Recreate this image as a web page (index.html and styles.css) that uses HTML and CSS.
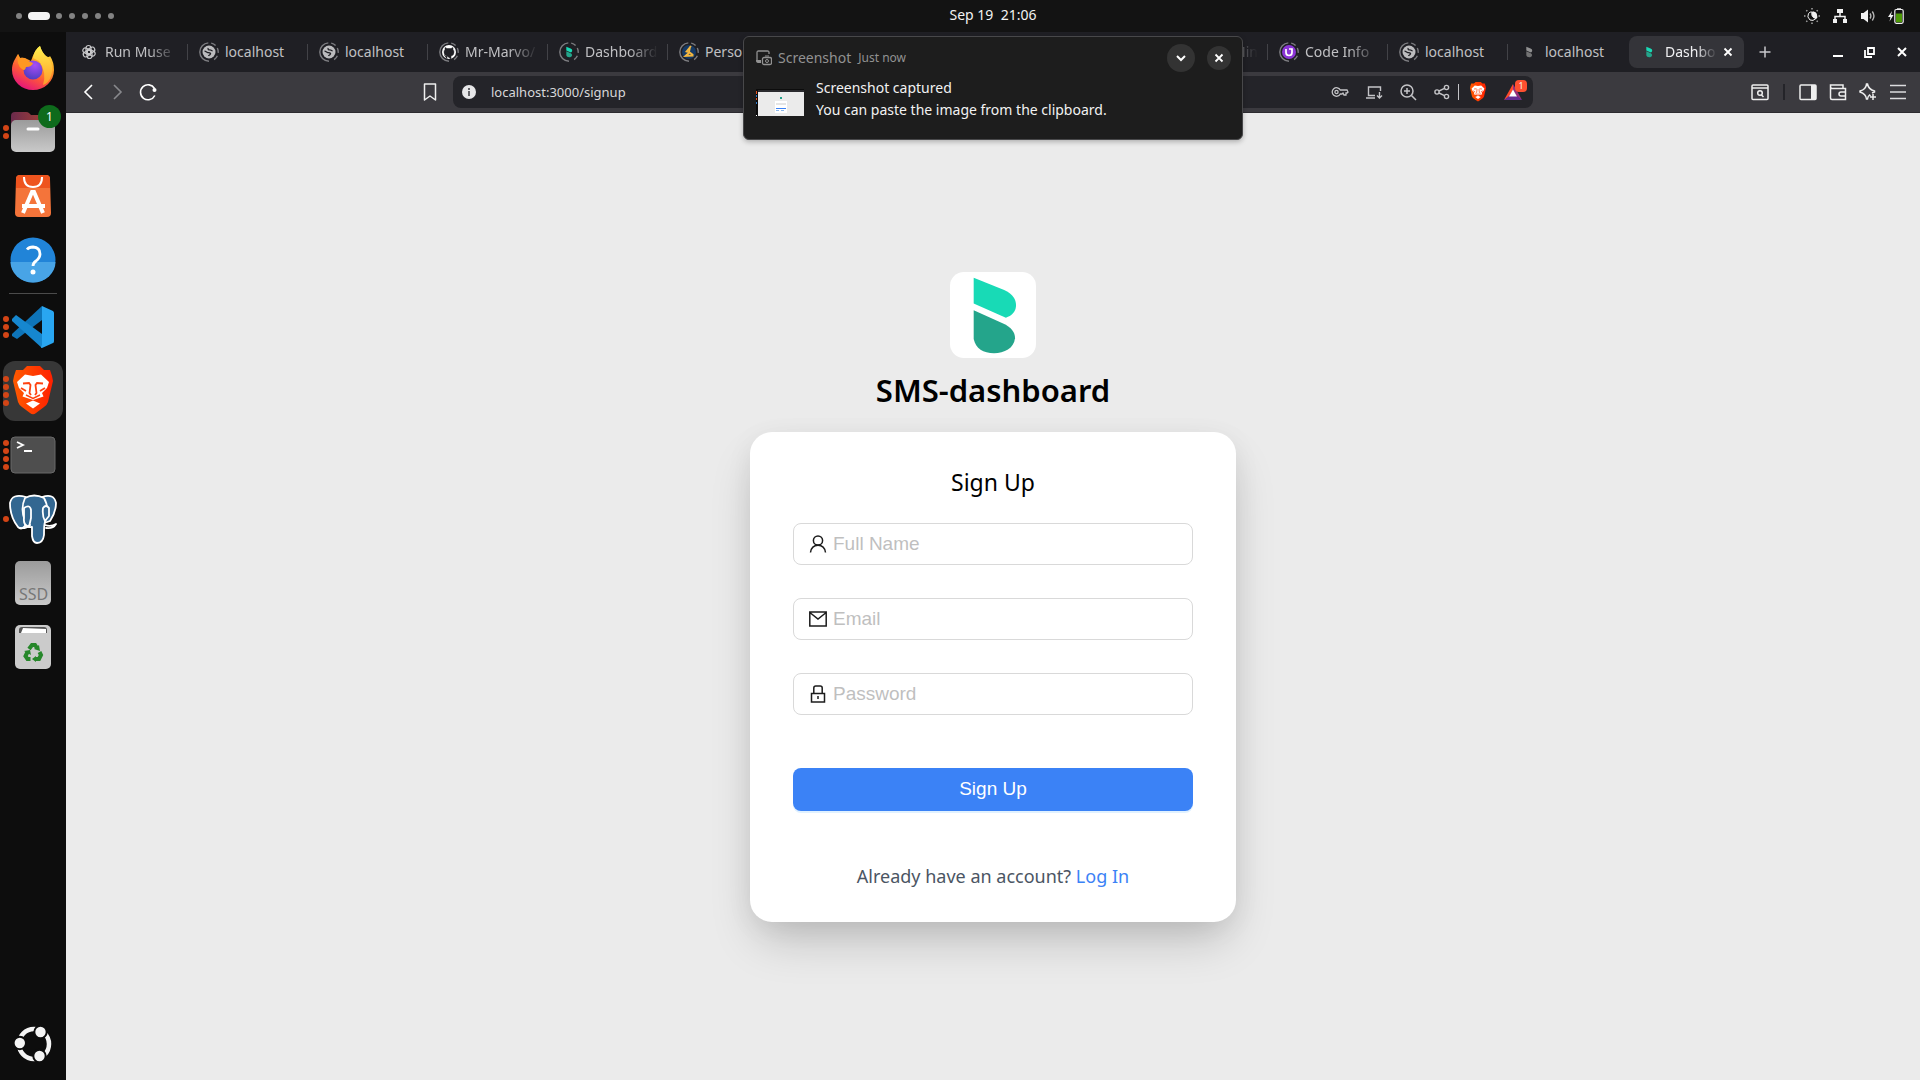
FILE: index.html
```html
<!DOCTYPE html>
<html lang="en">
<head>
<meta charset="utf-8">
<title>Dashboard</title>
<link rel="stylesheet" href="styles.css">
</head>
<body>
<svg class="defs" aria-hidden="true">
  <defs>
    <linearGradient id="g-fox" x1="0.8" y1="0" x2="0.3" y2="1"><stop offset="0" stop-color="#fff44f"/><stop offset=".35" stop-color="#ffa726"/><stop offset=".65" stop-color="#ff5a36"/><stop offset="1" stop-color="#e3127e"/></linearGradient>
    <radialGradient id="g-globe" cx=".6" cy=".25" r=".8"><stop offset="0" stop-color="#a84df5"/><stop offset="1" stop-color="#4a3cc0"/></radialGradient>
    <linearGradient id="g-tail" x1="0" y1="0" x2="0" y2="1"><stop offset="0" stop-color="#fff04d"/><stop offset="1" stop-color="#ff9a2a"/></linearGradient>
    <linearGradient id="g-grey" x1="0" y1="0" x2="0" y2="1"><stop offset="0" stop-color="#9b9b9b"/><stop offset="1" stop-color="#c9c9c9"/></linearGradient>
    <linearGradient id="g-folder" x1="0" y1="0" x2="1" y2="0"><stop offset="0" stop-color="#6b2a4c"/><stop offset="1" stop-color="#b5472f"/></linearGradient>
    <linearGradient id="g-brave" x1="0" y1="0" x2="1" y2="0"><stop offset="0" stop-color="#ff5a00"/><stop offset="1" stop-color="#ff2000"/></linearGradient>
  </defs>
  <symbol id="i-ring" viewBox="0 0 20 20">
    <circle cx="10" cy="10" r="9.200" fill="none" stroke="#7d7d81" stroke-width="1.400" stroke-dasharray="28 3 5 3 5 3 5 5.800" transform="rotate(90 10 10)"/>
  </symbol>
  <symbol id="i-globe" viewBox="0 0 20 20">
    <use href="#i-ring"/>
    <circle cx="10" cy="10" r="6.500" fill="#bcbcbe"/>
    <path d="M5.500 9.200c1.800 0 2.400 1.500 4.200 1.500 1.600 0 2.400.8 1.500 1.700-.8.600-1.300.8-1.700 1.700M9.200 6c-.6 1.400.4 2 1.700 1.800 1-.1 1.300.9 2.700 1" fill="none" stroke="#202025" stroke-width="1.300"/>
  </symbol>
  <symbol id="i-b" viewBox="0 0 254 254">
    <path d="M70 17 160 53C190 67 195 84 195 100C194 118 182 130 165 135L70 93Z" class="b-top"/>
    <path d="M70 113 165 156C186 169 192 182 192 196C189 226 160 240 130 240C98 240 76 226 70 198Z" class="b-bottom"/>
  </symbol>
  <symbol id="i-brave" viewBox="0 0 44 50">
    <path d="M12 4 16 0H29L33 4 39 4 41 10 42 15 37 36Q36 39 33 41L25 47Q22 49.500 19 47L11 41Q8 39 7 36L2 15 3 10 5 4Z" fill="url(#g-brave)"/>
    <path d="M14 8.500 22 10 30 8.500 38 16 36 22 31 27 32.500 30.500 22 34 11.500 30.500 13 27 8 22 6 16Z" fill="#fff"/>
    <path d="M22 34.500 29 37.500 22 42.500 15 37.500Z" fill="#fff"/>
    <path d="M12 17.500 18 17 19.500 19 18.500 27 20 29M32 17.500 26 17 24.500 19 25.500 27 24 29M10 22 15 25M34 22 29 25" fill="none" stroke="#ff4210" stroke-width="1.800"/>
    <path d="M15 29 22 32.500 29 29" fill="none" stroke="#ff4210" stroke-width="1.500"/>
  </symbol>
</svg>

<div class="desktop">
  <header class="topbar">
    <div class="workspaces"><i></i><i class="current"></i><i></i><i></i><i></i><i></i><i></i></div>
    <time class="clock">Sep 19&nbsp; 21:06</time>
    <div class="tray">
      <svg width="16" height="16" viewBox="0 0 16 16"><path d="M8.500 3.200a5 5 0 0 1 4 7.300Q7 10.500 8.500 3.200Z" fill="#f2f2f2"/><path d="M8 4q-1.500 5 4 6.500Q9 13.500 6 12 2.500 9 4.500 5.500 6 3.500 8 4Z" fill="none" stroke="#f2f2f2"/><path d="M8.200 4Q12 3 13 7t-1 3.500Q7 9.500 8.200 4Z" fill="#f2f2f2"/><path d="M8 0v1.500M8 14.500V16M0 8h1.500M14.500 8H16M2.300 2.300l1 1M12.700 12.700l1 1M2.300 13.700l1-1M12.700 3.300l1-1" stroke="#a5a5a5" stroke-width="1.500"/></svg>
      <svg width="16" height="16" viewBox="0 0 16 16"><path d="M5 1h6v4H5zM1 11h4v4H1zM11 11h4v4h-4z" fill="#f2f2f2"/><path d="M8 4v4M3 12V8.500h10V12" fill="none" stroke="#f2f2f2" stroke-width="1.500"/></svg>
      <svg width="16" height="16" viewBox="0 0 16 16"><path d="M1 5h2.500L8 1.500v13L3.500 11H1Z" fill="#f2f2f2"/><path d="M10 5.500q1.700 2.500 0 5M12.300 3.500q3.300 4.500 0 9" fill="none" stroke="#b5b5b5" stroke-width="1.400"/></svg>
      <svg width="16" height="16" viewBox="0 0 16 16"><path d="M4 3 0 9h2.500L1.500 13.500 5.500 7H3Z" fill="#f2f2f2"/><rect x="6.800" y="1.500" width="8.400" height="13.800" rx="1.500" fill="none" stroke="#f2f2f2" stroke-width="1.200"/><path d="M9 .3h4v1.500H9z" fill="#f2f2f2"/><path d="M8 5.500h6v8.700H8z" fill="#4e9a06"/></svg>
    </div>
  </header>

  <div class="workarea">
    <nav class="dock">
      <a class="app" href="#" aria-label="Firefox">
        <svg width="44" height="46" viewBox="0 0 44 46"><path d="M1 25C1 18 4 14 7 9L9 13Q13 12 16 14L20 16Q24 4 29 1Q31 8 35 11Q38 13 39 11Q43 17 43 25A21 20 0 0 1 1 25Z" fill="url(#g-fox)"/><path d="M22 13Q23 5 29 1Q31 8 36 12Q44 20 40 31Q38 38 32 40Q36 27 28 16Z" fill="url(#g-tail)"/><circle cx="22" cy="25" r="9.500" fill="url(#g-globe)"/><path d="M7 9 9 13Q14 12 17 16L22 18Q21 22 15 22 14 27 11 24Q5 20 7 9Z" fill="#ff9722"/></svg>
      </a>
      <a class="app" href="#" aria-label="Files">
        <span class="dots"><i></i><i></i></span>
        <svg width="46" height="46" viewBox="0 0 46 46"><path d="M1 7q0-4 4-4h11q2 0 3 1l2 2h20q4 0 4 4v10H1Z" fill="url(#g-folder)"/><rect x="1" y="11" width="44" height="32" rx="5" fill="url(#g-grey)"/><path d="M18 20h10" stroke="#fff" stroke-width="3" stroke-linecap="round"/></svg>
        <span class="count">1</span>
      </a>
      <a class="app" href="#" aria-label="App Center">
        <svg width="44" height="44" viewBox="0 0 44 44"><path d="M9 1h26q4 0 4 4l1 34q0 4-4 4H8q-4 0-4-4L5 5q0-4 4-4Z" fill="#f4743a"/><path d="M9 1h26q4 0 4 4v9H5V5q0-4 4-4Z" fill="#ee541e"/><path d="M13 3q0 10 9 10t9-10" fill="none" stroke="#fff" stroke-width="2"/><path d="M12 39 21 18h2l9 21M11 32h23" fill="none" stroke="#fff" stroke-width="4"/></svg>
      </a>
      <a class="app" href="#" aria-label="Help">
        <svg width="46" height="46" viewBox="0 0 46 46"><circle cx="23" cy="23" r="22.500" fill="#2184d8"/><path d="M.5 25a22.500 20.500 0 0 0 45 0Z" fill="#48a4e6"/><path d="M17 12.500Q19 10 23 10q7 .5 7 7 0 4-4 7-3 2-3 5" fill="none" stroke="#fff" stroke-width="2.800"/><circle cx="23" cy="35" r="2.500" fill="#fff"/></svg>
      </a>
      <hr>
      <a class="app" href="#" aria-label="Visual Studio Code">
        <span class="dots"><i></i><i></i><i></i></span>
        <svg width="44" height="44" viewBox="0 0 44 44"><path d="M1 29 31 1V15L6 34 1 31Z" fill="#0e74b8"/><path d="M1 14 5 10 31 29V43L1 16Z" fill="#1687cf"/><path d="M31 1 42 6Q43 7 43 8V36Q43 38 42 38L31 43Q29 43 31 40Z" fill="#29a6f1"/></svg>
      </a>
      <a class="app focused" href="#" aria-label="Brave">
        <span class="dots"><i></i><i></i><i></i><i></i></span>
        <svg width="44" height="50"><use href="#i-brave"/></svg>
      </a>
      <a class="app" href="#" aria-label="Terminal">
        <span class="dots"><i></i><i></i><i></i><i></i></span>
        <svg width="46" height="38" viewBox="0 0 46 38"><rect x="1" y="1" width="44" height="36" rx="4" fill="#4e4e4e" stroke="#686868"/><path d="M7 6 13 9 7 12M14 15h8" fill="none" stroke="#fff" stroke-width="1.800"/></svg>
      </a>
      <a class="app" href="#" aria-label="PostgreSQL">
        <span class="dots"><i></i></span>
        <svg width="48" height="50" viewBox="0 0 48 50"><g fill="#336791" stroke="#fff" stroke-width="1.800" stroke-linejoin="round" stroke-linecap="round"><path d="M17 3Q3-1 1 9q0 14 8 24 3 3 6 0l4-4-2-20Z"/><path d="M33 3q12-4 14 6 0 9-6 18l-6 2Z"/><path d="M16 4q9-5 19 0 6 10 1 24-1 2-1 13-1 8-7 8-4 0-5-7V33q-8 1-7-6-5-12 0-23Z"/><path d="M15 14q6-4 7 2v8l-2 9q-6-2-5-9ZM34 14q3-4 6 0v8l-4 5q-3-5-2-13Z" fill="#336791"/><path d="M36 31q6 2 11-1-3 5-10 4M21 31q-4 4-10 3" fill="none"/></g></svg>
      </a>
      <a class="app" href="#" aria-label="SSD">
        <svg width="38" height="46" viewBox="0 0 38 46"><rect x="1" y="1" width="36" height="44" rx="5" fill="url(#g-grey)"/></svg>
        <span class="disk-label">SSD</span>
      </a>
      <a class="app" href="#" aria-label="Trash">
        <svg width="38" height="46" viewBox="0 0 38 46"><rect x="1" y="1" width="36" height="44" rx="5" fill="#cbcbcb"/><path d="M5 9V6q0-3 3-3h22q3 0 3 3v3Z" fill="#555"/><path d="m7 9 2-5 23 1v4Z" fill="#fff"/><g fill="none" stroke="#26872a" stroke-width="4"><path d="M15 25l3-4h3l2 3M25.500 28l1.500 3-2 4H21M16.500 35h-3l-2-3 2-4"/></g><path d="m25 21 1 6-6-2ZM22 32v6l-4-3ZM10 27l6-1 1 5Z" fill="#26872a"/></svg>
      </a>
      <a class="app launcher" href="#" aria-label="Show apps">
        <svg width="38" height="38" viewBox="0 0 38 38"><circle cx="20" cy="19" r="15" fill="none" stroke="#f4f4f4" stroke-width="4.500"/><g fill="#f4f4f4" stroke="#0d0d0d" stroke-width="2"><circle cx="26.500" cy="7" r="6.200"/><circle cx="5.800" cy="18" r="6.200"/><circle cx="25.500" cy="31" r="6.200"/></g></svg>
      </a>
    </nav>

    <div class="browser">
      <div class="tabstrip">
        <div class="tab"><svg width="20" height="20" viewBox="0 0 20 20"><g fill="none" stroke="#c9c9cb" stroke-width="1.200"><rect x="7" y="3.500" width="5" height="8.500" rx="2.500"/><rect x="7" y="3.500" width="5" height="8.500" rx="2.500" transform="rotate(60 10 10)"/><rect x="7" y="3.500" width="5" height="8.500" rx="2.500" transform="rotate(120 10 10)"/><rect x="7" y="3.500" width="5" height="8.500" rx="2.500" transform="rotate(180 10 10)"/><rect x="7" y="3.500" width="5" height="8.500" rx="2.500" transform="rotate(240 10 10)"/><rect x="7" y="3.500" width="5" height="8.500" rx="2.500" transform="rotate(300 10 10)"/></g></svg><span>Run Muse</span></div>
        <div class="tab plain"><svg width="20" height="20"><use href="#i-globe"/></svg><span>localhost</span></div>
        <div class="tab plain"><svg width="20" height="20"><use href="#i-globe"/></svg><span>localhost</span></div>
        <div class="tab"><svg width="20" height="20" viewBox="0 0 20 20"><use href="#i-ring"/><circle cx="10" cy="10" r="7" fill="#fff"/><path d="M8 17v-3q-2 .5-3-1M8 14q-3-.5-3-4 0-1.500 1-2.500V5.500l2 1h4l2-1V7.500q1 1 1 2.500 0 3.500-3 4v3Z" fill="#202025" stroke="#202025" stroke-width=".5"/></svg><span>Mr-Marvo/</span></div>
        <div class="tab"><svg width="20" height="20" viewBox="0 0 20 20"><use href="#i-ring"/><use href="#i-b" x="4" y="4" width="12" height="12"/></svg><span>Dashboard</span></div>
        <div class="tab plain"><svg width="20" height="20" viewBox="0 0 20 20"><use href="#i-ring"/><circle cx="10" cy="10" r="7" fill="#153a66"/><path d="M12 4 7.500 9.500l3 1-4 3.500 8-.5M11 5l-1 5 4 3" fill="none" stroke="#f3b63f" stroke-width="1.800"/></svg><span>Perso</span></div>
        <div class="tab"></div>
        <div class="tab"></div>
        <div class="tab"></div>
        <div class="tab tail"><span>Min</span></div>
        <div class="tab"><svg width="20" height="20" viewBox="0 0 20 20"><use href="#i-ring"/><circle cx="10" cy="10" r="7" fill="#8b35d6"/><path d="M7 7v3.500q0 3 3 3t3-3V7h-3" fill="none" stroke="#fff" stroke-width="1.700"/></svg><span>Code Info</span></div>
        <div class="tab plain"><svg width="20" height="20"><use href="#i-globe"/></svg><span>localhost</span></div>
        <div class="tab plain muted"><svg width="20" height="20" viewBox="0 0 20 20"><use href="#i-b" x="4" y="4" width="12" height="12"/></svg><span>localhost</span></div>
        <div class="tab active"><svg width="20" height="20" viewBox="0 0 20 20"><use href="#i-b" x="4" y="4" width="12" height="12"/></svg><span>Dashbo</span><button aria-label="Close tab"><svg width="10" height="10" viewBox="0 0 10 10"><path d="m1.500 1.500 7 7m0-7-7 7" stroke="#fff" stroke-width="1.800"/></svg></button></div>
        <button class="newtab" aria-label="New tab"><svg width="12" height="12" viewBox="0 0 12 12"><path d="M6 .5v11M.5 6h11" stroke="#c8c8cb" stroke-width="1.500"/></svg></button>
        <div class="winctl">
          <button aria-label="Minimize"><svg width="12" height="12" viewBox="0 0 12 12"><path d="M1 10h10" stroke="#fff" stroke-width="2"/></svg></button>
          <button aria-label="Restore"><svg width="12" height="12" viewBox="0 0 12 12"><path d="M4 2h6v6H4zM1 4v7h7" fill="none" stroke="#fff" stroke-width="1.800"/></svg></button>
          <button aria-label="Close"><svg width="12" height="12" viewBox="0 0 12 12"><path d="m2 2 8 8m0-8-8 8" stroke="#fff" stroke-width="2"/></svg></button>
        </div>
      </div>

      <div class="toolbar">
        <div class="navbtns">
          <button aria-label="Back"><svg width="20" height="20" viewBox="0 0 20 20"><path d="M14 3 7 10l7 7" fill="none" stroke="#fff" stroke-width="1.600"/></svg></button>
          <button aria-label="Forward"><svg width="20" height="20" viewBox="0 0 20 20"><path d="m6 3 7 7-7 7" fill="none" stroke="#89898d" stroke-width="1.600"/></svg></button>
          <button aria-label="Reload"><svg width="20" height="20" viewBox="0 0 20 20"><path d="M16.500 6.500a7.500 7.500 0 1 0 .3 7" fill="none" stroke="#fff" stroke-width="1.600"/><circle cx="16.500" cy="8" r="2" fill="#fff"/></svg></button>
        </div>
        <button class="bookmark" aria-label="Bookmark"><svg width="20" height="20" viewBox="0 0 20 20"><path d="M4.500 2h11v16L10 14l-5.500 4Z" fill="none" stroke="#eee" stroke-width="1.500" stroke-linejoin="round"/></svg></button>
        <div class="omnibox">
          <svg width="14" height="14" viewBox="0 0 14 14"><circle cx="7" cy="7" r="7" fill="#e6e6e8"/><path d="M7 3v2M7 6v5" stroke="#55555a" stroke-width="1.800"/></svg>
          <input aria-label="Address" value="localhost:3000/signup">
          <div class="boxicons">
            <svg width="18" height="18" viewBox="0 0 18 18"><g fill="none" stroke="#c4c4c7" stroke-width="1.300"><path d="M9.300 7A4.300 4.300 0 1 0 9.300 11L11 11l1-1 1 2h2v-2h1l1-1-1-2Z"/><circle cx="5.500" cy="9" r="1.600"/></g></svg>
            <svg width="18" height="18" viewBox="0 0 18 18"><path d="M10 12.500H3.500V4h12v4M1 15h9M14.500 9v6M12 12.500l2.500 2.500 2.500-2.500" fill="none" stroke="#c4c4c7" stroke-width="1.400"/></svg>
            <svg width="18" height="18" viewBox="0 0 18 18"><path d="M12.500 12.500 17 17M8 5v6M5 8h6" stroke="#c4c4c7" stroke-width="1.500"/><circle cx="8" cy="8" r="6" fill="none" stroke="#c4c4c7" stroke-width="1.500"/></svg>
            <svg width="18" height="18" viewBox="0 0 18 18"><g fill="none" stroke="#c4c4c7" stroke-width="1.400"><circle cx="4" cy="9" r="2.100"/><circle cx="13.500" cy="4.500" r="2.100"/><circle cx="13.500" cy="13.500" r="2.100"/><path d="m6 8 5.500-2.600M6 10l5.500 2.600"/></g></svg>
          </div>
          <i class="bar"></i>
          <svg class="shield" width="18" height="20"><use href="#i-brave"/></svg>
          <span class="rewards"><svg width="18" height="16" viewBox="0 0 18 16"><path d="M9 0v6l-4 7-5 3Z" fill="#ff4a2c"/><path d="M9 0v6l4 7 5 3Z" fill="#98307a"/><path d="m0 16 5-4h8l5 4Z" fill="#662d91"/><path d="m9 5.500 4 7H5Z" fill="#fff"/></svg><b>1</b></span>
        </div>
        <div class="actions">
          <button aria-label="Search tabs"><svg width="20" height="20" viewBox="0 0 20 20"><g fill="none" stroke="#eee" stroke-width="1.500"><rect x="2" y="3" width="16" height="14.500" rx="1"/><path d="M2 6h16M11.500 13l2 2"/><circle cx="10" cy="11" r="2.300"/></g></svg></button>
          <i class="bar dark"></i>
          <button aria-label="Sidebar"><svg width="20" height="20" viewBox="0 0 20 20"><rect x="2" y="3" width="16" height="14.500" rx="1" fill="none" stroke="#eee" stroke-width="1.500"/><path d="M13 3h5v14.500h-5z" fill="#eee"/></svg></button>
          <button aria-label="Wallet"><svg width="20" height="20" viewBox="0 0 20 20"><path d="M15 6V3H2.500v13q0 1.500 1.500 1.500h13.500V6.500H4Q2.500 6.500 2.500 4M17.500 10H13q-2 0-2 2t2 2h4.500" fill="none" stroke="#eee" stroke-width="1.500"/></svg></button>
          <button aria-label="Leo AI"><svg width="20" height="20" viewBox="0 0 20 20"><path d="M12.500 14 11.500 13Q10 14 9.500 17H8.500Q8 12 2 10V9Q8 7.500 8.500 2H9.500Q10.500 7.500 16.500 9V10L14 11M15 12v6M12 15h6" fill="none" stroke="#eee" stroke-width="1.500"/></svg></button>
          <button aria-label="Menu"><svg width="20" height="20" viewBox="0 0 20 20"><path d="M2 3.500h16M2 10h16M2 16.500h16" stroke="#dcdcde" stroke-width="1.600"/></svg></button>
        </div>
      </div>

      <main class="page">
        <div class="brand">
          <svg class="logo" width="86" height="86"><use href="#i-b"/></svg>
          <h1>SMS-dashboard</h1>
        </div>
        <form class="card">
          <h2>Sign Up</h2>
          <label class="field"><svg width="18" height="18" viewBox="0 0 18 18"><g fill="none" stroke="#1c1c1c" stroke-width="1.500"><circle cx="9" cy="5.500" r="4.600"/><path d="M1.500 17.500Q2.500 10.300 9 10.300t7.500 7.200"/></g></svg><input type="text" placeholder="Full Name" aria-label="Full Name"></label>
          <label class="field"><svg width="18" height="18" viewBox="0 0 18 18"><path d="M.8 2h16.400v14H.8ZM.8 2.500 9 9l8.200-6.500" fill="none" stroke="#1c1c1c" stroke-width="1.500"/></svg><input type="email" placeholder="Email" aria-label="Email"></label>
          <label class="field"><svg width="18" height="18" viewBox="0 0 18 18"><path d="M2.500 8.500h13v8.500h-13ZM4.800 8.500V3q0-2 2-2h4.400q2 0 2 2v5.500M9 11v3" fill="none" stroke="#1c1c1c" stroke-width="1.500"/></svg><input type="password" placeholder="Password" aria-label="Password"></label>
          <button type="submit" class="submit">Sign Up</button>
          <p>Already have an account? <a href="#">Log In</a></p>
        </form>
      </main>
    </div>
  </div>

  <aside class="notification">
    <div class="note-head">
      <svg width="16" height="16" viewBox="0 0 16 16"><path d="M13 4V2.500Q13 1 11.500 1h-9Q1 1 1 2.500V11h4" fill="none" stroke="#929292" stroke-width="1.300"/><path d="M0 10h5v3H2Q0 13 0 10Z" fill="#929292"/><rect x="6.500" y="7.500" width="9" height="7" rx="1.500" fill="none" stroke="#929292" stroke-width="1.300"/><circle cx="11" cy="11" r="1.500" fill="none" stroke="#929292"/><path d="M9 6h4" stroke="#929292"/></svg>
      <span>Screenshot</span><small>Just now</small>
      <button class="expand" aria-label="Expand"><svg width="12" height="12" viewBox="0 0 12 12"><path d="m2 4 4 4 4-4" fill="none" stroke="#fff" stroke-width="2"/></svg></button>
      <button class="dismiss" aria-label="Dismiss"><svg width="12" height="12" viewBox="0 0 12 12"><path d="m2.500 2.500 7 7m0-7-7 7" stroke="#fff" stroke-width="1.800"/></svg></button>
    </div>
    <div class="note-body">
      <svg width="48" height="27" viewBox="0 0 48 27"><path d="M0 0h48v27H0z" fill="#0c0c0c"/><path d="M2 1h46v2H2z" fill="#2b2b2f"/><path d="M2 3h46v24H2z" fill="#ebebeb"/><path d="M0 2h1v3H0zM0 9h1v2H0z" fill="#e95420"/><path d="M0 6h1v2H0zM0 13h1v2H0z" fill="#2f7fd0"/><path d="M0 26h1v1H0z" fill="#fff"/><path d="M24 8h2v2h-2z" fill="#22a08a"/><path d="M19 12h12v12H19z" fill="#fff"/><path d="M20 14h10v2H20z" fill="#e4e4e4"/><path d="M20 19h10v1H20z" fill="#3b82f6"/><path d="M20 21h3v1h-3zM25 21h3v1h-3z" fill="#8ab6ea"/></svg>
      <div><strong>Screenshot captured</strong><p>You can paste the image from the clipboard.</p></div>
    </div>
  </aside>
</div>
</body>
</html>
```
FILE: styles.css
```css
* { box-sizing: border-box; }
body {
  margin: 0;
  font: 14px/20px "Noto Sans", sans-serif;
  color: #f2f2f2;
  background: #131313;
}
h1, h2, p { margin: 0; }
button { border: 0; padding: 0; background: none; font: inherit; color: inherit; }
button, .dock a { display: flex; align-items: center; justify-content: center; }
svg { flex: none; display: block; }
.defs { position: absolute; width: 0; height: 0; }
.b-top { fill: #18dab6; }
.b-bottom { fill: #24a58b; }

.desktop { position: relative; min-height: 100vh; display: flex; flex-direction: column; }

/* system bar */
.topbar {
  height: 32px;
  display: grid;
  grid-template-columns: 1fr auto 1fr;
  align-items: center;
  background: #131313;
  padding: 0 16px;
}
.workspaces { display: flex; align-items: center; gap: 7px; }
.workspaces i { width: 6px; height: 6px; border-radius: 50%; background: #828282; }
.workspaces .current { width: 22px; height: 8px; border-radius: 4px; background: #f4f4f4; margin: 0 -1px; }
.clock { padding-left: 66px; line-height: 18px; padding-bottom: 2px; }
.tray { display: flex; justify-content: flex-end; gap: 12px; }

.workarea { flex: 1; display: flex; }

/* dock */
.dock { width: 66px; background: #0d0d0d; padding: 4px 3px; display: flex; flex-direction: column; }
.app { position: relative; height: 60px; margin: 2px 0; border-radius: 12px; text-decoration: none; }
.focused { background: #373737; }
.dots { position: absolute; left: 0; display: flex; flex-direction: column; gap: 2px; }
.dots i { width: 6px; height: 6px; border-radius: 50%; background: #d34516; }
.count {
  position: absolute; right: 2px; top: 3px;
  width: 23px; height: 23px; border-radius: 50%;
  background: #0e6b1c; color: #fff;
  font-size: 12px; line-height: 23px; text-align: center;
}
.disk-label { position: absolute; left: 16px; bottom: 10px; font-size: 16px; color: #777; line-height: 18px; }
.dock hr { width: 48px; height: 1px; border: 0; margin: 1px auto; background: #4b4b4b; }
.launcher { margin-top: auto; }

/* tabs */
.browser { flex: 1; min-width: 0; display: flex; flex-direction: column; }
.tabstrip { height: 40px; background: #1f1f24; display: flex; align-items: center; padding: 0 2px; }
.tab {
  flex: 0 1 120px;
  min-width: 0;
  height: 20px;
  display: flex;
  align-items: center;
  gap: 6px;
  padding: 0 10px 0 11px;
  color: #c0c0c3;
  background: linear-gradient(#424247, #424247) right center / 1px 16px no-repeat;
}
.tab span {
  flex: 1;
  overflow: hidden;
  white-space: nowrap;
  -webkit-mask-image: linear-gradient(90deg, #000 60%, transparent 100%);
  mask-image: linear-gradient(90deg, #000 60%, transparent 100%);
}
.tab.plain span { -webkit-mask-image: none; mask-image: none; }
.tab.muted { background: none; }
.tab.tail span { text-align: right; }
.tab.muted svg { filter: grayscale(1); opacity: .8; }
.tab.active {
  flex-basis: 115px;
  height: 32px;
  margin-left: 1px;
  padding: 0 11px 0 10px;
  border-radius: 8px;
  background: #343439;
  color: #f0f0f2;
}
.newtab { width: 24px; height: 24px; margin-left: 9px; }
.winctl { margin-left: auto; display: flex; gap: 20px; padding-right: 10px; }

/* toolbar */
.toolbar { height: 41px; background: #3b3a3f; border-bottom: 1px solid #2c2b30; display: flex; align-items: center; padding: 0 12px; }
.navbtns { display: flex; gap: 10px; }
.bookmark { margin-left: 262px; }
.omnibox {
  flex: 0 1 1080px;
  min-width: 0;
  height: 32px;
  margin-left: 13px;
  padding: 0 10px 0 9px;
  border-radius: 8px;
  background: #242429;
  display: flex;
  align-items: center;
}
.omnibox input { flex: 1; min-width: 0; margin-left: 15px; padding: 0; border: 0; outline: 0; background: none; font: 13px/20px "Noto Sans", sans-serif; color: #d8d8da; }
.boxicons { display: flex; gap: 16px; }
.bar { width: 1px; height: 16px; background: #c4c4c7; margin-left: 7px; }
.bar.dark { width: 2px; background: #242429; margin: 0 3px; }
.shield { margin-left: 10px; }
.rewards { position: relative; margin: 0 0 0 17px; padding-right: 1px; }
.rewards b {
  position: absolute; left: 11px; top: -4px;
  width: 12px; height: 12px; border-radius: 4px;
  background: #ff5030; font: 9px/12px "Noto Sans", sans-serif; text-align: center;
}
.actions { margin-left: auto; display: flex; align-items: center; gap: 10px; }

/* sign-up page */
.page {
  flex: 1;
  background: #ebebeb;
  color: #000;
  display: flex;
  flex-direction: column;
  align-items: center;
  justify-content: center;
  padding: 24px 0;
}
.brand { display: flex; flex-direction: column; align-items: center; }
.logo { background: #fff; border-radius: 14px; }
h1 { margin: 10px 0 20px; font-size: 31px; line-height: 44px; font-weight: 600; }
.card {
  width: 486px;
  max-width: 100%;
  padding: 32px 43px;
  border-radius: 22px;
  background: #fff;
  box-shadow: 0 24px 48px -8px rgba(0, 0, 0, .2), 0 6px 28px rgba(0, 0, 0, .06);
  display: flex;
  flex-direction: column;
}
h2 { margin-bottom: 23px; font-size: 23px; line-height: 36px; font-weight: 400; text-align: center; }
.field {
  height: 42px;
  margin-bottom: 33px;
  padding: 0 15px;
  border: 1px solid #d9d9d9;
  border-radius: 8px;
  display: flex;
  align-items: center;
  gap: 6px;
}
.field input { flex: 1; min-width: 0; padding: 0; border: 0; outline: 0; background: none; font: 19px/28px "Liberation Sans", sans-serif; }
.field input::placeholder { color: #bfbfbf; opacity: 1; }
.submit {
  height: 43px;
  margin-top: 20px;
  border-radius: 8px;
  background: #3b82f6;
  box-shadow: 0 2px 0 #e0f1ff;
  color: #fff;
  font: 19px/28px "Liberation Sans", sans-serif;
}
.card p { margin-top: 51px; font-size: 18px; line-height: 28px; text-align: center; color: #4b5563; }
.card a { color: #3b82f6; text-decoration: none; }

/* notification */
.notification {
  position: absolute;
  top: 36px;
  left: calc(50% + 33px);
  width: 500px;
  height: 104px;
  margin-left: -250px;
  padding: 7px 11px 0 12px;
  border: 1px solid #48484a;
  border-radius: 6px;
  background: #1d1d1d;
  box-shadow: 0 2px 5px rgba(0, 0, 0, .25);
}
.note-head { display: flex; align-items: center; height: 28px; color: #929292; }
.note-head span { margin-left: 6px; }
.note-head small { margin-left: 7px; font-size: 12px; }
.expand { width: 28px; height: 28px; margin-left: auto; border-radius: 50%; background: #333; }
.dismiss { width: 24px; height: 24px; margin-left: 12px; border-radius: 50%; background: #333; }
.note-body { display: flex; align-items: center; gap: 12px; margin-top: 5px; line-height: 22px; }
.note-body svg { margin-top: 6px; }
.note-body strong { display: block; font-weight: 400; }
```
